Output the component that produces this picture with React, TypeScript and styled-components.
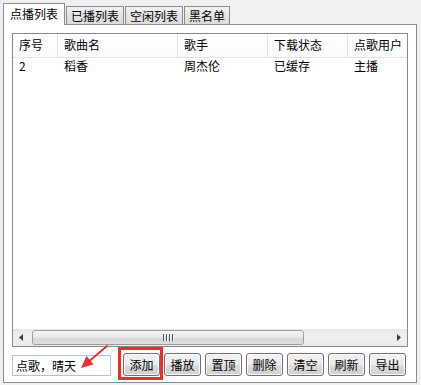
import React from 'react';
import styled, { createGlobalStyle, css } from 'styled-components';

const GlobalStyle = createGlobalStyle`
  html, body {
    margin: 0;
    padding: 0;
    background: #f0f0f0;
  }
  body {
    font-family: "Noto Sans CJK SC", "Liberation Sans", sans-serif;
    font-size: 12px;
    color: #000;
  }
`;

interface Column {
  title: string;
  width: number;
}

const columns: Column[] = [
  { title: '序号', width: 45 },
  { title: '歌曲名', width: 120 },
  { title: '歌手', width: 90 },
  { title: '下载状态', width: 80 },
  { title: '点歌用户', width: 80 },
];

const rows: string[][] = [['2', '稻香', '周杰伦', '已缓存', '主播']];

const tabs = ['点播列表', '已播列表', '空闲列表', '黑名单'];
const actions = ['添加', '播放', '置顶', '删除', '清空', '刷新', '导出'];

const Window = styled.div`
  width: 421px;
  height: 385px;
  box-sizing: border-box;
  padding: 3px 4px 0 3px;
  background: #f0f0f0;
  overflow: hidden;
`;

const TabBar = styled.div`
  display: flex;
  align-items: flex-end;
  gap: 1px;
  height: 22px;
  position: relative;
  z-index: 2;
`;

const Tab = styled.div<{ $active?: boolean }>`
  box-sizing: border-box;
  border: 1px solid #898c95;
  line-height: 16px;
  white-space: nowrap;
  ${p =>
    p.$active
      ? css`
          height: 22px;
          padding: 2px 6px 0;
          background: #fff;
          border-bottom: none;
        `
      : css`
          height: 19px;
          padding: 1px 4px 0;
          background: linear-gradient(#f3f3f3, #e5e5e5 50%, #dcdcdc);
        `}
`;

const Panel = styled.div`
  box-sizing: border-box;
  height: 359px;
  margin-top: -1px;
  border: 1px solid #898c95;
  background: #fff;
  padding: 8px 8px 6px 8px;
  display: flex;
  flex-direction: column;
`;

const ListBox = styled.div`
  box-sizing: border-box;
  height: 314px;
  border: 1px solid #828790;
  display: flex;
  flex-direction: column;
  overflow: hidden;
`;

const HeaderRow = styled.div`
  display: flex;
  height: 23px;
  border-bottom: 1px solid #e0e2e6;
  background: linear-gradient(#ffffff, #fbfbfb);
  flex-shrink: 0;
`;

const HeaderCell = styled.div`
  box-sizing: border-box;
  flex-shrink: 0;
  padding-left: 6px;
  line-height: 22px;
  border-right: 1px solid #e3e5e8;
  white-space: nowrap;
  overflow: hidden;
`;

const Row = styled.div`
  display: flex;
  height: 16px;
  flex-shrink: 0;
`;

const Cell = styled.div`
  box-sizing: border-box;
  flex-shrink: 0;
  padding-left: 6px;
  line-height: 16px;
  white-space: nowrap;
  overflow: hidden;
`;

const Filler = styled.div`
  flex: 1;
`;

const ScrollBar = styled.div`
  height: 17px;
  flex-shrink: 0;
  display: flex;
  align-items: stretch;
  background: linear-gradient(#e6e6e6, #f0f0f0 40%, #ececec);
`;

const ArrowButton = styled.div`
  width: 17px;
  display: flex;
  align-items: center;
  justify-content: center;
  flex-shrink: 0;
`;

const Track = styled.div`
  flex: 1;
  display: flex;
  padding: 1px 0;
`;

const Thumb = styled.div`
  box-sizing: border-box;
  width: 272px;
  margin-left: 2px;
  border: 1px solid #9c9c9c;
  border-radius: 3px;
  background: linear-gradient(#f4f4f4, #e8e8e8 50%, #d6d6d6 51%, #dcdcdc);
  display: flex;
  align-items: center;
  justify-content: center;
  gap: 1px;
`;

const Grip = styled.span`
  width: 1px;
  height: 7px;
  background: #4f4f4f;
  box-shadow: 1px 0 0 #fafafa;
  margin-right: 1px;
`;

const Footer = styled.div`
  position: relative;
  display: flex;
  align-items: center;
  margin-top: 6px;
  height: 23px;
`;

const Input = styled.div`
  box-sizing: border-box;
  width: 99px;
  height: 21px;
  margin-top: 1px;
  border: 1px solid #a9c4e4;
  background: #fff;
  padding-left: 3px;
  line-height: 19px;
  font-size: 12px;
  margin-right: 12px;
`;

const ButtonRow = styled.div`
  display: flex;
  gap: 4px;
`;

const Button = styled.div<{ $highlight?: boolean }>`
  position: relative;
  box-sizing: border-box;
  width: 37px;
  height: 23px;
  border: 1px solid #707070;
  border-radius: 3px;
  background: linear-gradient(#f2f2f2, #ebebeb 50%, #dddddd 51%, #cfcfcf);
  box-shadow: inset 0 0 0 1px #fcfcfc;
  text-align: center;
  line-height: 21px;
  font-size: 12px;
  ${p =>
    p.$highlight &&
    css`
      &::after {
        content: '';
        position: absolute;
        left: -6px;
        top: -7px;
        right: -4px;
        bottom: -5px;
        border: 3px solid #ee2e2e;
      }
    `}
`;

const Pointer = styled.svg`
  position: absolute;
  left: 66px;
  top: -8px;
  overflow: visible;
`;

const LeftArrow = () => (
  <svg width="5" height="7" viewBox="0 0 5 7">
    <path d="M4 0 L0 3.5 L4 7 Z" fill="#3a3a3a" />
  </svg>
);

const RightArrow = () => (
  <svg width="5" height="7" viewBox="0 0 5 7">
    <path d="M1 0 L5 3.5 L1 7 Z" fill="#3a3a3a" />
  </svg>
);

const App: React.FC = () => (
  <>
    <GlobalStyle />
    <Window>
      <TabBar>
        {tabs.map((t, i) => (
          <Tab key={t} $active={i === 0}>
            {t}
          </Tab>
        ))}
      </TabBar>
      <Panel>
        <ListBox>
          <HeaderRow>
            {columns.map(c => (
              <HeaderCell key={c.title} style={{ width: c.width }}>
                {c.title}
              </HeaderCell>
            ))}
          </HeaderRow>
          {rows.map((r, i) => (
            <Row key={i}>
              {r.map((v, j) => (
                <Cell key={j} style={{ width: columns[j].width }}>
                  {v}
                </Cell>
              ))}
            </Row>
          ))}
          <Filler />
          <ScrollBar>
            <ArrowButton>
              <LeftArrow />
            </ArrowButton>
            <Track>
              <Thumb>
                <Grip />
                <Grip />
                <Grip />
                <Grip />
              </Thumb>
            </Track>
            <ArrowButton>
              <RightArrow />
            </ArrowButton>
          </ScrollBar>
        </ListBox>
        <Footer>
          <Input>点歌，晴天</Input>
          <ButtonRow>
            {actions.map((a, i) => (
              <Button key={a} $highlight={i === 0}>
                {a}
              </Button>
            ))}
          </ButtonRow>
          <Pointer width="32" height="28" viewBox="0 0 32 28">
            <path d="M29 1 L12 15.5" stroke="#e8302c" strokeWidth="1.8" strokeLinecap="round" />
            <path d="M3 23 L15.5 19.5 L8.5 11 Z" fill="#e8302c" />
          </Pointer>
        </Footer>
      </Panel>
    </Window>
  </>
);

export default App;
